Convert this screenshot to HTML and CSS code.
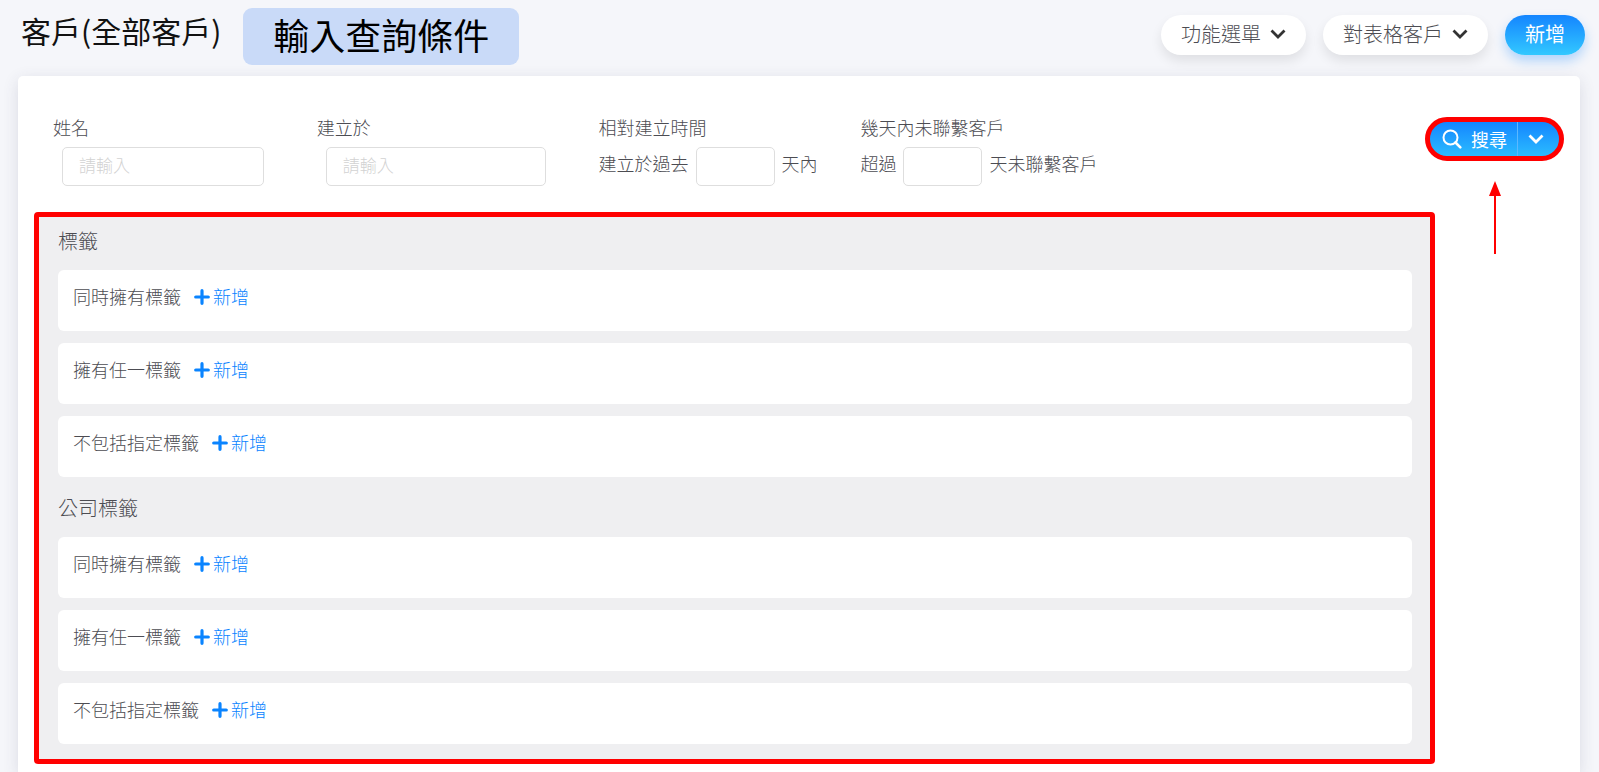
FILE: index.html
```html
<!DOCTYPE html>
<html lang="zh-Hant">
<head>
<meta charset="utf-8">
<meta name="viewport" content="width=device-width, initial-scale=1">
<title>客戶(全部客戶)</title>
<link rel="stylesheet" href="styles.css">
</head>
<body>
<svg class="defs" width="0" height="0">
  <symbol id="chevron" viewBox="0 0 16 10">
    <path d="M1.5 1.5 L8 8 L14.5 1.5" fill="none" stroke="currentColor" stroke-width="2.8" />
  </symbol>
  <symbol id="plus" viewBox="0 0 16 16">
    <path d="M8 1.7 V14.3 M1.7 8 H14.3" fill="none" stroke="currentColor" stroke-width="3.2" stroke-linecap="round" />
  </symbol>
</svg>

<header class="topbar">
  <h1>客戶(全部客戶)</h1>
  <div class="note">輸入查詢條件</div>
  <div class="actions">
    <button type="button" class="pill">功能選單<svg class="chevron"><use href="#chevron" /></svg></button>
    <button type="button" class="pill">對表格客戶<svg class="chevron"><use href="#chevron" /></svg></button>
    <button type="button" class="pill primary">新增</button>
  </div>
</header>

<main class="card">
  <form class="filters">
    <div class="fields">
      <div class="field">
        <label for="name">姓名</label>
        <input type="text" id="name" class="text" placeholder="請輸入">
      </div>
      <div class="field">
        <label for="created">建立於</label>
        <input type="text" id="created" class="text" placeholder="請輸入">
      </div>
      <div class="field">
        <label for="past_days">相對建立時間</label>
        <div class="inline">建立於過去<input type="text" id="past_days" class="days">天內</div>
      </div>
      <div class="field">
        <label for="idle_days">幾天內未聯繫客戶</label>
        <div class="inline">超過<input type="text" id="idle_days" class="days">天未聯繫客戶</div>
      </div>
    </div>
    <div class="search">
      <button type="button" class="search_main">
        <svg width="20" height="20" viewBox="0 0 20 20">
          <circle cx="8.5" cy="8.5" r="7" fill="none" stroke="#fff" stroke-width="2" />
          <path d="M13.5 13.5 L18.3 18.3" stroke="#fff" stroke-width="2.6" stroke-linecap="round" />
        </svg>搜尋</button>
      <button type="button" class="search_more" aria-label="更多"><svg class="chevron"><use href="#chevron" /></svg></button>
      <svg class="arrow" width="12" height="73">
        <path d="M6 0 L12 15 H0 Z" fill="#f00" />
        <line x1="6" y1="14" x2="6" y2="73" stroke="#f00" stroke-width="2" />
      </svg>
    </div>
  </form>

  <section class="tags">
    <h2>標籤</h2>
    <div class="row">同時擁有標籤<button type="button" class="add"><svg><use href="#plus" /></svg>新增</button></div>
    <div class="row">擁有任一標籤<button type="button" class="add"><svg><use href="#plus" /></svg>新增</button></div>
    <div class="row">不包括指定標籤<button type="button" class="add"><svg><use href="#plus" /></svg>新增</button></div>
    <h2>公司標籤</h2>
    <div class="row">同時擁有標籤<button type="button" class="add"><svg><use href="#plus" /></svg>新增</button></div>
    <div class="row">擁有任一標籤<button type="button" class="add"><svg><use href="#plus" /></svg>新增</button></div>
    <div class="row">不包括指定標籤<button type="button" class="add"><svg><use href="#plus" /></svg>新增</button></div>
  </section>
</main>
</body>
</html>
```
FILE: styles.css
```css
* {
  box-sizing: border-box;
}
body {
  margin: 0;
  min-height: 100vh;
  display: flex;
  flex-direction: column;
  background: #f5f6fa;
  color: #4c4c52;
  font-family: "Noto Sans CJK TC", sans-serif;
  font-size: 18px;
  font-weight: 300;
  line-height: 24px;
}
button, input {
  font: inherit;
  color: inherit;
}
button {
  padding: 0;
  border: 0;
  background: none;
  cursor: pointer;
}
.defs {
  position: absolute;
}
.chevron {
  width: 16px;
  height: 10px;
}

.topbar {
  display: flex;
  align-items: flex-start;
  padding: 8px 14px 11px 21px;
}
h1 {
  margin: 2px 22px 0 0;
  color: #111;
  font-size: 30px;
  font-weight: 400;
  line-height: 40px;
}
.note {
  padding: 0 30px 4px;
  border-radius: 9px;
  background: #c9daf8;
  color: #000;
  font-size: 36px;
  font-weight: 400;
  line-height: 53px;
}
.actions {
  display: flex;
  gap: 17px;
  margin: 7px 0 0 auto;
}
.pill {
  display: flex;
  align-items: center;
  gap: 9px;
  height: 40px;
  padding: 0 20px 2px;
  border-radius: 20px;
  background: #fff;
  box-shadow: 0 6px 12px rgba(0,0,0,0.09);
  font-size: 20px;
}
.pill .chevron {
  color: #333;
}
.primary {
  background: linear-gradient(#1485ff, #33c8ff);
  box-shadow: 0 6px 12px rgba(20,133,255,0.3);
  color: #fff;
  font-weight: 400;
}

.card {
  flex: 1;
  margin: 0 19px 0 18px;
  padding: 39px 16px 8px;
  border-radius: 5px 5px 0 0;
  background: #fff;
  box-shadow: 0 4px 16px rgba(60,60,90,0.14);
}
.filters {
  display: flex;
  align-items: flex-start;
  padding-left: 19px;
}
.fields {
  flex: 1;
  display: grid;
  grid-template-columns: 264fr 282fr 262fr 564fr;
}
.field label {
  display: block;
  margin-bottom: 8px;
}
.text, .days {
  height: 39px;
  border: 1px solid #dedede;
  border-radius: 5px;
  background: #fff;
}
.text {
  display: block;
  width: calc(100% - 62px);
  margin-left: 9px;
  padding: 0 16px 4px;
  font-size: 17px;
}
.text::placeholder {
  color: #d2d2d2;
}
.days {
  width: 79px;
  padding: 0 8px;
}
.inline {
  display: flex;
  gap: 7px;
  line-height: 32px;
  white-space: nowrap;
}

.search {
  position: relative;
  display: flex;
  width: 139px;
  height: 44px;
  margin: 2px 0 51px 1px;
  border: 5px solid #f00;
  border-radius: 22px;
  background: linear-gradient(#1485ff, #2bbcff);
  color: #fff;
}
.search_main {
  display: flex;
  align-items: center;
  gap: 9px;
  padding: 0 10px 0 12px;
  font-weight: 400;
}
.search_more {
  flex: 1;
  border-left: 1px solid #5cb8ff;
}
.search_more .chevron {
  display: block;
  margin-left: 10px;
}
.arrow {
  position: absolute;
  left: 59px;
  top: 59px;
}

.tags {
  margin-right: 129px;
  padding: 0 18px 15px 19px;
  border: 5px solid #f00;
  border-radius: 4px;
  background: #efeff1;
}
h2 {
  margin: 0;
  padding: 8px 0 13px;
  font-size: 20px;
  font-weight: 300;
  line-height: 32px;
}
.row {
  display: flex;
  align-items: flex-start;
  height: 61px;
  padding: 14px 15px;
  border-radius: 6px;
  background: #fff;
}
.row + .row {
  margin-top: 12px;
}
.row + h2 {
  padding-top: 15px;
}
.add {
  display: flex;
  align-items: center;
  gap: 3px;
  margin-left: 13px;
  color: #0a84ff;
}
.add svg {
  width: 16px;
  height: 16px;
  margin-top: 2px;
}
```
